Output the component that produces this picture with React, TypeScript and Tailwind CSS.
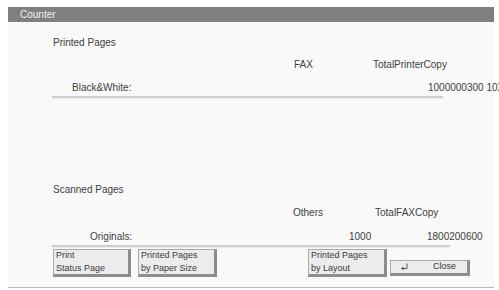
import React from "react";

function PanelButton({
    lines,
    className = "",
}: {
    lines: string[];
    className?: string;
}) {
    return (
        <button className={`flex flex-col items-start justify-center bg-[#ececec] border border-[#a9a9a9] border-r-[3px] border-b-[3px] border-r-[#8c8c8c] border-b-[#8c8c8c] pl-[2px] text-left text-[9px] leading-[13px] text-[#3a3a3a] ${className}`}>
            {lines.map((l) => (
                <span key={l} className="whitespace-nowrap">
                    {l}
                </span>
            ))}
        </button>
    );
}

export default function App() {
    return (
        <div className="w-[499px] h-[290px] overflow-hidden bg-white font-['Liberation_Sans',Arial,sans-serif] text-[10px] text-[#404040]">
            <div className="ml-[8px] mt-[7px] w-[486px] h-[281px] bg-[#f9f9f9] border-b border-[#b8b8b8] flex flex-col">
                <div className="h-[15px] bg-[#7f7f7f] text-[#f2f2f2] pl-[12px] leading-[15px] text-[10px]">
                    Counter
                </div>

                <div className="pl-[45px] flex flex-col">
                    {/* printed pages */}
                    <div className="mt-[15px] h-[12px] leading-[12px]">Printed Pages</div>
                    <div className="mt-[10px] h-[12px] leading-[12px] flex">
                        <div className="w-[241px]" />
                        <div className="w-[79px]">FAX</div>
                        <div>TotalPrinterCopy</div>
                    </div>
                    <div className="mt-[11px] h-[12px] leading-[12px] flex whitespace-nowrap">
                        <div className="w-[375px] shrink-0 pl-[19px]">Black&amp;White:</div>
                        <div className="shrink-0">1000000300 10X</div>
                    </div>
                    <div className="mt-[2px] -ml-[1px] w-[391px] h-[3px] border-t-2 border-[#cdcdcd] border-b border-b-[#ececec]" />

                    {/* scanned pages */}
                    <div className="mt-[85px] h-[12px] leading-[12px]">Scanned Pages</div>
                    <div className="mt-[11px] h-[12px] leading-[12px] flex">
                        <div className="w-[240px]" />
                        <div className="w-[82px]">Others</div>
                        <div>TotalFAXCopy</div>
                    </div>
                    <div className="mt-[12px] h-[12px] leading-[12px] flex whitespace-nowrap">
                        <div className="w-[296px] pl-[37px]">Originals:</div>
                        <div className="w-[78px]">1000</div>
                        <div>1800200600</div>
                    </div>
                    <div className="mt-[2px] -ml-[1px] w-[398px] h-[3px] border-t-2 border-[#cdcdcd] border-b border-b-[#ececec]" />

                    {/* buttons */}
                    <div className="mt-[1px] flex items-end">
                        <PanelButton lines={["Print", "Status Page"]} className="w-[78px] h-[28px]" />
                        <PanelButton lines={["Printed Pages", "by Paper Size"]} className="ml-[7px] w-[79px] h-[28px]" />
                        <PanelButton lines={["Printed Pages", "by Layout"]} className="ml-[91px] w-[79px] h-[28px]" />
                        <button className="ml-[3px] mb-[1px] w-[80px] h-[16px] flex items-center bg-[#ececec] border border-[#a9a9a9] border-r-[3px] border-b-[3px] border-r-[#8c8c8c] border-b-[#8c8c8c] text-[9px] text-[#3a3a3a]">
                            <svg width="9" height="8" viewBox="0 0 9 8" className="ml-[9px]">
                                <path d="M7 0.5 V5.5 H1.5" fill="none" stroke="#555" strokeWidth="1" />
                                <path d="M1 5.5 L3.5 3.5 V7.5 Z" fill="#555" />
                            </svg>
                            <span className="ml-[24px]">Close</span>
                        </button>
                    </div>
                </div>
            </div>
        </div>
    );
}
